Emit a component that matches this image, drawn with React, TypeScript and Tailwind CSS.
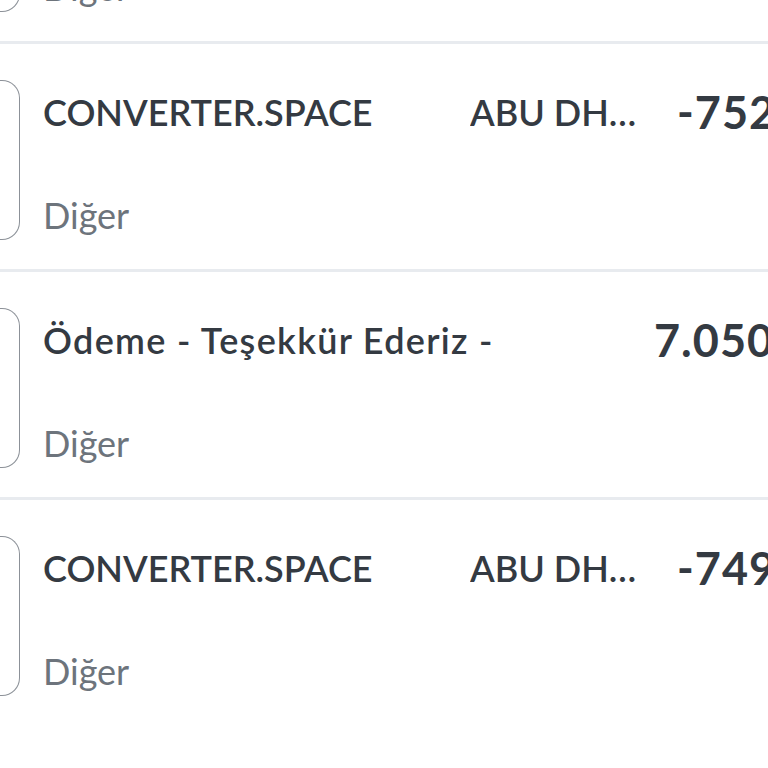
import React from 'react';

type Tx = {
    title: string;
    place?: string;
    amount: string;
    category: string;
};

const items: Tx[] = [
    { title: 'CONVERTER.SPACE', place: 'ABU DHABI', amount: '-752,40', category: 'Diğer' },
    { title: 'CONVERTER.SPACE', place: 'ABU DHABI', amount: '-752,40', category: 'Diğer' },
    { title: 'Ödeme - Teşekkür Ederiz -', amount: '7.050,00', category: 'Diğer' },
    { title: 'CONVERTER.SPACE', place: 'ABU DHABI', amount: '-749,10', category: 'Diğer' },
];

function Row({ tx, last }: { tx: Tx; last: boolean }) {
    return (
        <div className={`flex h-[228px] items-start pt-[36px] ${last ? '' : 'border-b-[3px] border-[#e8ebef]'}`}>
            {/* ikon kutusu (soldan taşıyor) */}
            <div className="h-[160px] w-[20px] shrink-0 rounded-r-[18px] border-y-[1.5px] border-r-[1.5px] border-[#8c9198]" />

            <div className="flex h-[160px] min-w-0 flex-1 flex-col justify-between pl-[23px] pt-[8px] pb-[1px]">
                <div className="flex items-center whitespace-nowrap">
                    <span
                        className={`w-[427px] shrink-0 text-[36px] font-semibold leading-[48px] text-[#343a42] ${
                            tx.place ? '' : 'tracking-[1.3px]'
                        }`}
                    >
                        {tx.title}
                    </span>
                    {tx.place ? (
                        <span className="w-[172px] shrink-0 overflow-hidden text-ellipsis text-[36px] font-semibold leading-[48px] text-[#343a42]">
                            {tx.place}
                        </span>
                    ) : (
                        <span className="w-[184px] shrink-0" />
                    )}
                    <span className={`${tx.place ? 'ml-[35px]' : ''} text-[45px] font-bold leading-[48px] tracking-[1px] text-[#343a42]`}>
                        {tx.amount}
                    </span>
                </div>
                <span className="text-[36px] leading-[48px] text-[#6d747c]">{tx.category}</span>
            </div>
        </div>
    );
}

export default function App() {
    return (
        <div className="h-[768px] w-[768px] overflow-hidden bg-white" style={{ fontFamily: '"Lato", "Noto Sans", sans-serif' }}>
            <div className="mt-[-184px]">
                {items.map((tx, i) => (
                    <Row key={i} tx={tx} last={i === items.length - 1} />
                ))}
            </div>
        </div>
    );
}
